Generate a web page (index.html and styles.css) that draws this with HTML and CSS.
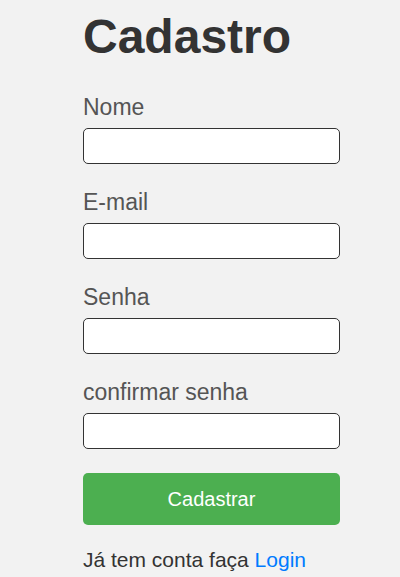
FILE: index.html
```html
<!DOCTYPE html>
<html lang="pt">
<head>
<meta charset="utf-8">
<title>Cadastro</title>
<link rel="stylesheet" href="styles.css">
</head>
<body>
<main class="container">
  <h1 class="title">Cadastro</h1>
  <form class="form">
    <div class="field">
      <label class="label" for="nome">Nome</label>
      <input class="input" id="nome" type="text">
    </div>
    <div class="field">
      <label class="label" for="email">E-mail</label>
      <input class="input" id="email" type="email">
    </div>
    <div class="field">
      <label class="label" for="senha">Senha</label>
      <input class="input" id="senha" type="password">
    </div>
    <div class="field">
      <label class="label" for="confirmar">confirmar senha</label>
      <input class="input" id="confirmar" type="password">
    </div>
    <button class="btn" type="button">Cadastrar</button>
  </form>
  <p class="footer">Já tem conta faça <a class="link" href="#">Login</a></p>
</main>
</body>
</html>
```
FILE: styles.css
```css
html, body {
  margin: 0;
  padding: 0;
  background: #f2f2f2;
  font-family: "Liberation Sans", Arial, sans-serif;
}
.container {
  width: 257px;
  margin-left: 83px;
  padding-top: 9px;
}
.title {
  margin: 0 0 31px;
  font-size: 48px;
  line-height: 55px;
  font-weight: bold;
  color: #333;
}
.form {
  display: flex;
  flex-direction: column;
}
.field {
  display: flex;
  flex-direction: column;
  margin-bottom: 26px;
}
.field:last-of-type {
  margin-bottom: 24px;
}
.label {
  font-size: 23px;
  line-height: 25px;
  color: #555;
  margin-bottom: 8px;
}
.input {
  box-sizing: border-box;
  height: 36px;
  width: 100%;
  margin: 0;
  border: 1px solid #333;
  border-radius: 5px;
  background: #fff;
}
.btn {
  height: 52px;
  width: 100%;
  border: none;
  border-radius: 5px;
  background: #4caf50;
  color: #fff;
  font-family: "Liberation Sans", Arial, sans-serif;
  font-size: 20px;
}
.footer {
  margin: 23px 0 0;
  font-size: 21px;
  line-height: 24px;
  color: #333;
}
.link {
  color: #007bff;
  text-decoration: none;
}
```
